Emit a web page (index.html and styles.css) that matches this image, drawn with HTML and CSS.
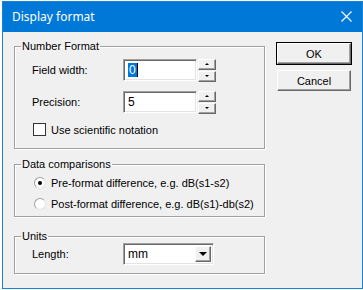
FILE: index.html
```html
<!DOCTYPE html>
<html lang="en">
<head>
    <meta charset="UTF-8">
    <title>Display format</title>
    <link rel="stylesheet" href="styles.css">
</head>
<body>
    <div class="window">
        <div class="titlebar">
            <span class="title">Display format</span>
            <svg class="close" width="11" height="11" viewBox="0 0 11 11">
                <path d="M0.5 0.5 L10.5 10.5 M10.5 0.5 L0.5 10.5" stroke="#fff" stroke-width="1.1" fill="none"/>
            </svg>
        </div>
        <div class="content">
            <div class="groups">
                <fieldset class="group group-number">
                    <legend>Number Format</legend>
                    <div class="row">
                        <span class="label">Field width:</span>
                        <div class="spinner">
                            <div class="edit"><span class="sel">0</span><span class="caret"></span></div>
                            <div class="spin">
                                <div class="spin-btn"><span class="arrow up"></span></div>
                                <div class="spin-btn"><span class="arrow down"></span></div>
                            </div>
                        </div>
                    </div>
                    <div class="row">
                        <span class="label">Precision:</span>
                        <div class="spinner">
                            <div class="edit">5</div>
                            <div class="spin">
                                <div class="spin-btn"><span class="arrow up"></span></div>
                                <div class="spin-btn"><span class="arrow down"></span></div>
                            </div>
                        </div>
                    </div>
                    <label class="check">
                        <span class="box"></span>
                        Use scientific notation
                    </label>
                </fieldset>

                <fieldset class="group group-data">
                    <legend>Data comparisons</legend>
                    <label class="radio">
                        <span class="dot checked"></span>
                        Pre-format difference, e.g. dB(s1-s2)
                    </label>
                    <label class="radio">
                        <span class="dot"></span>
                        Post-format difference, e.g. dB(s1)-db(s2)
                    </label>
                </fieldset>

                <fieldset class="group group-units">
                    <legend>Units</legend>
                    <div class="row">
                        <span class="label">Length:</span>
                        <div class="combo">
                            <span class="combo-text">mm</span>
                            <div class="combo-btn"><span class="arrow down big"></span></div>
                        </div>
                    </div>
                </fieldset>
            </div>

            <div class="buttons">
                <button class="btn default">OK</button>
                <button class="btn">Cancel</button>
            </div>
        </div>
    </div>
</body>
</html>
```

FILE: styles.css
```css
body {
    margin: 0;
    background: #fff;
    font-family: "Liberation Sans", Arial, sans-serif;
    font-size: 11px;
    color: #000;
}

.window {
    box-sizing: border-box;
    width: 361px;
    height: 288px;
    margin: 1px 0 0 2px;
    border: 1px solid #1883d7;
    background: #f0f0f0;
    display: flex;
    flex-direction: column;
}

.titlebar {
    height: 30px;
    background: #0078d7;
    color: #fff;
    display: flex;
    align-items: center;
    justify-content: space-between;
    padding: 0 10px 0 9px;
    flex-shrink: 0;
}

.title {
    font-family: "Noto Sans", sans-serif;
    font-size: 12px;
    margin-top: -1px;
}

.close {
    display: block;
    margin-top: -1px;
}

.content {
    display: flex;
    padding: 8px 0 0 11px;
}

.groups {
    width: 251px;
    display: flex;
    flex-direction: column;
}

/* group boxes */
.group {
    margin: 0;
    padding: 0 0 0 17px;
    border: 1px solid #a0a0a0;
    box-shadow: 1px 1px 0 #fff, inset 1px 1px 0 #fff;
    min-width: 0;
}

.group legend {
    padding: 0 1px;
    margin-left: -11px;
    line-height: 13px;
}

.group-number {
    padding-top: 6px;
    padding-bottom: 12px;
}

.group-data {
    margin-top: 9px;
    padding-top: 0;
    padding-bottom: 6px;
}

.group-units {
    margin-top: 13px;
    padding-top: 0;
    padding-bottom: 8px;
}

.row {
    display: flex;
    align-items: center;
    height: 22px;
    margin-bottom: 10px;
}

.group-units .row {
    margin-bottom: 0;
}

.label {
    width: 91px;
}

/* edit + spin */
.spinner {
    display: flex;
}

.edit,
.combo {
    box-sizing: border-box;
    height: 22px;
    background: #fff;
    border: 1px solid;
    border-color: #a0a0a0 #fff #fff #a0a0a0;
    box-shadow: inset 1px 1px 0 #696969, inset -1px -1px 0 #e3e3e3;
    padding: 3px 0 0 4px;
}

.edit {
    width: 74px;
    font-size: 12px;
    display: flex;
    align-items: flex-start;
}

.sel {
    background: #0078d7;
    color: #fff;
    padding: 0 1px;
    line-height: 14px;
}

.caret {
    width: 1px;
    height: 14px;
    background: #000;
}

.spin {
    display: flex;
    flex-direction: column;
    gap: 1px;
    margin-left: 1px;
}

.spin-btn {
    box-sizing: border-box;
    width: 18px;
    height: 11px;
    background: #f0f0f0;
    border: 1px solid;
    border-color: #fff #696969 #696969 #fff;
    box-shadow: inset -1px -1px 0 #a0a0a0;
    display: flex;
    align-items: center;
    justify-content: center;
}

.arrow {
    width: 0;
    height: 0;
    border-left: 2px solid transparent;
    border-right: 2px solid transparent;
}

.arrow.up {
    border-bottom: 2px solid #000;
}

.arrow.down {
    border-top: 2px solid #000;
}

.arrow.big {
    border-left-width: 4px;
    border-right-width: 4px;
    border-top-width: 4px;
}

/* checkbox / radio */
.check,
.radio {
    display: flex;
    align-items: center;
    gap: 5px;
    height: 13px;
}

.check {
    margin-top: 5px;
    padding-left: 1px;
}

.box {
    box-sizing: border-box;
    width: 13px;
    height: 13px;
    background: #fff;
    border: 1px solid #333;
}

.radio {
    margin-top: 8px;
    padding-left: 2px;
}

.radio:first-of-type {
    margin-top: 5px;
}

.dot {
    box-sizing: border-box;
    width: 12px;
    height: 12px;
    border-radius: 50%;
    background: #fff;
    border: 1px solid;
    border-color: #a0a0a0 #e3e3e3 #e3e3e3 #a0a0a0;
    display: flex;
    align-items: center;
    justify-content: center;
}

.dot.checked::after {
    content: "";
    width: 4px;
    height: 4px;
    border-radius: 50%;
    background: #000;
}

/* combo */
.combo {
    width: 91px;
    display: flex;
    justify-content: space-between;
    padding: 2px 2px 2px 4px;
    font-size: 12px;
}

.combo-text {
    line-height: 16px;
}

.combo-btn {
    box-sizing: border-box;
    width: 16px;
    height: 16px;
    background: #f0f0f0;
    border: 1px solid;
    border-color: #fff #696969 #696969 #fff;
    box-shadow: inset -1px -1px 0 #a0a0a0;
    display: flex;
    align-items: center;
    justify-content: center;
}

/* buttons */
.buttons {
    display: flex;
    flex-direction: column;
    gap: 6px;
    margin: 3px 0 0 12px;
}

.btn {
    box-sizing: border-box;
    width: 74px;
    height: 21px;
    padding: 0;
    font-family: "Liberation Sans", Arial, sans-serif;
    font-size: 11px;
    color: #000;
    background: #f0f0f0;
    border: 1px solid;
    border-color: #fff #696969 #696969 #fff;
    box-shadow: inset -1px -1px 0 #a0a0a0;
}

.btn.default {
    outline: 1px solid #000;
}
```
